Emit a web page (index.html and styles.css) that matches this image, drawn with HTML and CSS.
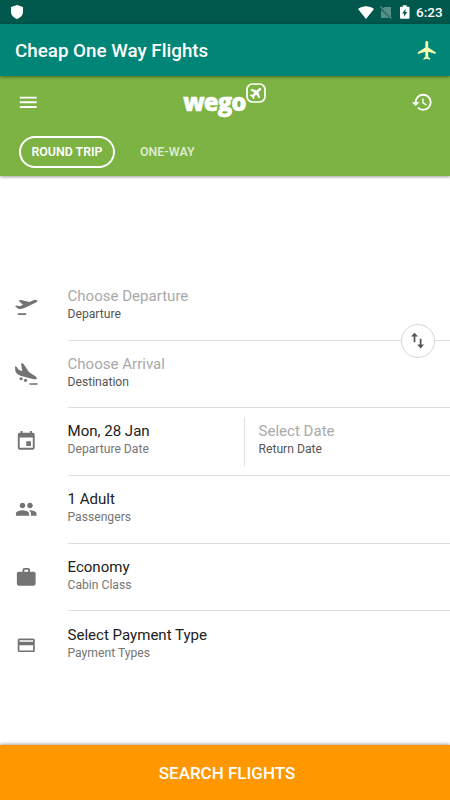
FILE: index.html
```html
<!DOCTYPE html>
<html lang="en">
<head>
<meta charset="utf-8">
<title>Cheap One Way Flights</title>
<link rel="stylesheet" href="styles.css">
</head>
<body>
<div class="status">
  <svg class="shield" viewBox="0 0 12 14"><path d="M6 0 12 2v5c0 3-2.500 5.800-6 7C2.500 12.800 0 10 0 7V2z"/></svg>
  <svg class="wifi" viewBox="0 0 16 13"><path d="M0 3C4.500-.8 11.500-.8 16 3L8 13z"/></svg>
  <svg class="nosim" viewBox="0 0 12 13"><path d="M4.500 1H11v10L2.800 2.700z M1 3.500V12h8.500z"/><path class="slash" d="M.5.5l11 12"/></svg>
  <svg class="battery" viewBox="0 0 10 14"><path fill-rule="evenodd" d="M3 0h4v1.500h2q1 0 1 1V13q0 1-1 1H1q-1 0-1-1V2.500q0-1 1-1h2zM5.800 3.500 2.400 8.500h2L4.100 12 7.600 7h-2z"/></svg>
  <time>6:23</time>
</div>
<header class="appbar">
  <h1>Cheap One Way Flights</h1>
  <svg class="plane" viewBox="0 0 24 24"><path d="M21 16v-2l-8-5V3.500c0-.83-.67-1.500-1.500-1.500S10 2.670 10 3.500V9l-8 5v2l8-2.500V19l-2 1.500V22l3.500-1 3.500 1v-1.500L13 19v-5.500z"/></svg>
</header>
<section class="hero">
  <div class="toolbar">
    <svg class="menu" viewBox="0 0 24 24"><path d="M3 18h18v-2H3zm0-5h18v-2H3zm0-7v2h18V6z"/></svg>
    <div class="logo"><span class="word">wego</span>
      <svg class="badge" viewBox="0 0 20 20"><rect x="1" y="1" width="18" height="18" rx="5.500"/><path transform="translate(10 10) rotate(45) scale(.62) translate(-11.500 -12)" d="M21 15v-3l-7.500-3.500V3.500c0-3-4-3-4 0V8.500L2 12v3l7.500-1.500V18l-2.500 2v2l4.500-1 4.500 1v-2L13.500 18v-4.500z"/></svg>
    </div>
    <svg class="history" viewBox="0 0 24 24"><path d="M13 3a9 9 0 0 0-9 9H1l3.890 3.890.07.140L9 12H6c0-3.870 3.130-7 7-7s7 3.130 7 7-3.130 7-7 7c-1.930 0-3.680-.79-4.940-2.060l-1.420 1.420A8.950 8.950 0 0 0 13 21a9 9 0 0 0 0-18m-1 5v5l4.280 2.540.72-1.210-3.500-2.080V8z"/></svg>
  </div>
  <nav class="tabs"><span class="tab active">ROUND TRIP</span><span class="tab">ONE-WAY</span></nav>
</section>
<main class="form">
  <div class="row">
    <svg class="ico" viewBox="0 0 24 24"><path d="M3 19.500h9v1.800H3zM0 12l2.100-.8 3.200.7 3.200-1.500-4.700-4.200 2.600-1 9 2.200 4.200-1.700c1.600-.6 4-.5 4.400.3.200.7-1.200 1.900-2.700 2.600L10 13.900c-2.400 1.100-5 1.500-6.500.8z"/></svg>
    <div class="field"><div class="cell empty"><b>Choose Departure</b><span>Departure</span></div></div>
    <div class="swap"><svg viewBox="0 0 16 18"><path d="M4 0 8 4.500H5V11H3V4.500H0zM10 7h2v6.500h3L11 18l-4-4.500h3z"/></svg></div>
  </div>
  <div class="row">
    <svg class="ico land" viewBox="0 0 24 24"><path d="M15.500 21.500h8.500v1.800h-8.500zM0 3.500l1.900.8 1.900 3 4 1.500L6.300 0l2.900 1.100 5.600 8.500 5.700 3.600c1.700 1 3.200 2.700 2.800 3.600-.4.800-2.500.7-4.200.2L6.500 13.900C3 12.700.8 10.700.3 8.300z"/><circle cx="6.500" cy="16.800" r="1.700"/><circle cx="11.200" cy="18.500" r="1.700"/></svg>
    <div class="field"><div class="cell empty"><b>Choose Arrival</b><span>Destination</span></div></div>
  </div>
  <div class="row">
    <svg class="ico" viewBox="0 0 24 24"><path d="M17 12h-5v5h5zM16 1v2H8V1H6v2H5c-1.110 0-1.990.9-1.990 2L3 19a2 2 0 0 0 2 2h14c1.100 0 2-.9 2-2V5c0-1.100-.9-2-2-2h-1V1zm3 18H5V8h14z"/></svg>
    <div class="field split"><div class="cell"><b>Mon, 28 Jan</b><span>Departure Date</span></div><div class="cell empty return"><b>Select Date</b><span>Return Date</span></div></div>
  </div>
  <div class="row">
    <svg class="ico" viewBox="0 0 24 24"><path d="M16 11c1.660 0 2.990-1.340 2.990-3S17.660 5 16 5s-3 1.340-3 3 1.340 3 3 3m-8 0c1.660 0 2.990-1.340 2.990-3S9.660 5 8 5 5 6.340 5 8s1.340 3 3 3m0 2c-2.330 0-7 1.170-7 3.500V19h14v-2.500c0-2.330-4.670-3.500-7-3.500m8 0c-.29 0-.62.02-.97.05 1.160.84 1.970 1.970 1.970 3.450V19h6v-2.500c0-2.330-4.670-3.500-7-3.500"/></svg>
    <div class="field"><div class="cell"><b>1 Adult</b><span>Passengers</span></div></div>
  </div>
  <div class="row">
    <svg class="ico" viewBox="0 0 24 24"><path d="M20 6h-4V4c0-1.110-.89-2-2-2h-4c-1.110 0-2 .89-2 2v2H4c-1.110 0-1.990.89-1.990 2L2 19c0 1.110.89 2 2 2h16c1.110 0 2-.89 2-2V8c0-1.110-.89-2-2-2m-6 0h-4V4h4z"/></svg>
    <div class="field"><div class="cell"><b>Economy</b><span>Cabin Class</span></div></div>
  </div>
  <div class="row">
    <svg class="ico card" viewBox="0 0 24 24"><path d="M20 4H4c-1.110 0-1.990.89-1.990 2L2 18c0 1.110.89 2 2 2h16c1.110 0 2-.89 2-2V6c0-1.110-.89-2-2-2m0 14H4v-6h16zm0-10H4V6h16z"/></svg>
    <div class="field last"><div class="cell"><b>Select Payment Type</b><span>Payment Types</span></div></div>
  </div>
</main>
<button class="search">SEARCH FLIGHTS</button>
</body>
</html>
```
FILE: styles.css
```css
* { box-sizing: border-box; }
body { margin: 0; width: 450px; height: 800px; display: flex; flex-direction: column; overflow: hidden; background: #fff; font-family: Roboto, sans-serif; }
svg { display: block; flex: none; fill: currentColor; overflow: visible; }
.status { height: 24px; flex: none; display: flex; align-items: center; background: #00574b; color: #fff; padding: 0 8px 0 11px; }
.shield { width: 12px; height: 14px; }
.wifi { width: 16px; height: 13px; margin-left: auto; }
.nosim { width: 12px; height: 13px; margin-left: 6px; color: #568f87; }
.slash { stroke: #568f87; stroke-width: 1.2; }
.battery { width: 9.5px; height: 14px; margin-left: 8px; }
.status time { font-size: 13.5px; font-weight: 500; width: 26px; margin-left: 6.5px; white-space: nowrap; }
.appbar { height: 52px; flex: none; display: flex; align-items: center; justify-content: space-between; background: #008577; color: #fff; padding: 0 12px 0 15px; z-index: 2; box-shadow: 0 1px 3px rgba(0,0,0,.45); }
.appbar h1 { margin: 0; font-size: 18.8px; font-weight: 500; line-height: 24px; padding-top: 1px; }
.plane { width: 22.5px; height: 22.5px; color: #f4ffb0; }
.hero { height: 99.5px; flex: none; background: #7cb342; color: #fff; box-shadow: 0 1px 3px rgba(0,0,0,.4); }
.toolbar { height: 52px; display: flex; align-items: center; justify-content: space-between; padding: 0 17px; }
.menu, .history { width: 22.5px; height: 22.5px; }
.logo { display: flex; width: 84px; height: 38px; }
.word { font: 800 24px/37px "Open Sans", sans-serif; letter-spacing: -1px; -webkit-text-stroke: .4px #fff; }
.badge { width: 20px; height: 20px; margin-left: .5px; }
.badge rect { fill: none; stroke: #fff; stroke-width: 1.7; }
.tabs { display: flex; align-items: center; padding: 8px 19px 0; }
.tab { height: 32px; font-size: 12.4px; font-weight: 600; line-height: 32px; padding: 0 13px; color: #dcebcd; }
.tab.active { width: 96px; padding: 0; text-align: center; line-height: 28px; border: 2px solid #fff; border-radius: 16px; color: #fff; margin-right: 12px; }
.form { margin-top: 97.4px; flex: none; }
.row { position: relative; height: 67.7px; display: grid; grid-template-columns: 67.5px 1fr; }
.ico { width: 22.5px; height: 22.5px; margin: 22px 0 0 15px; color: #737373; }
.card { width: 20.5px; height: 20.5px; margin: 23.5px 0 0 16px; }
.field { border-bottom: 1px solid #dedede; padding-top: 13.2px; }
.field.last { border: 0; }
.cell { display: flex; flex-direction: column; }
.cell b { font-size: 15.05px; line-height: 20px; font-weight: 400; color: #212121; white-space: nowrap; }
.cell span { font-size: 12.15px; line-height: 16px; color: #757575; white-space: nowrap; }
.cell.empty b { color: #a9a9a9; }
.cell.empty span { color: #555; }
.split { display: grid; grid-template-columns: 176px 1fr; padding-top: 9px; }
.split .cell { height: 49px; padding-top: 4px; }
.return { border-left: 1px solid #dedede; padding-left: 14px; }
.swap { position: absolute; right: 15px; bottom: -17px; width: 34px; height: 34px; border: 1px solid #d5d5d5; border-radius: 50%; background: #fff; color: #555; display: grid; place-items: center; z-index: 1; }
.swap svg { width: 14px; height: 17px; }
.search { margin-top: auto; height: 55px; flex: none; border: 0; background: #ff9800; color: #fff; font: 500 17px Roboto, sans-serif; padding: 0 0 0 4px; box-shadow: 0 -1px 3px rgba(0,0,0,.35); }
```
